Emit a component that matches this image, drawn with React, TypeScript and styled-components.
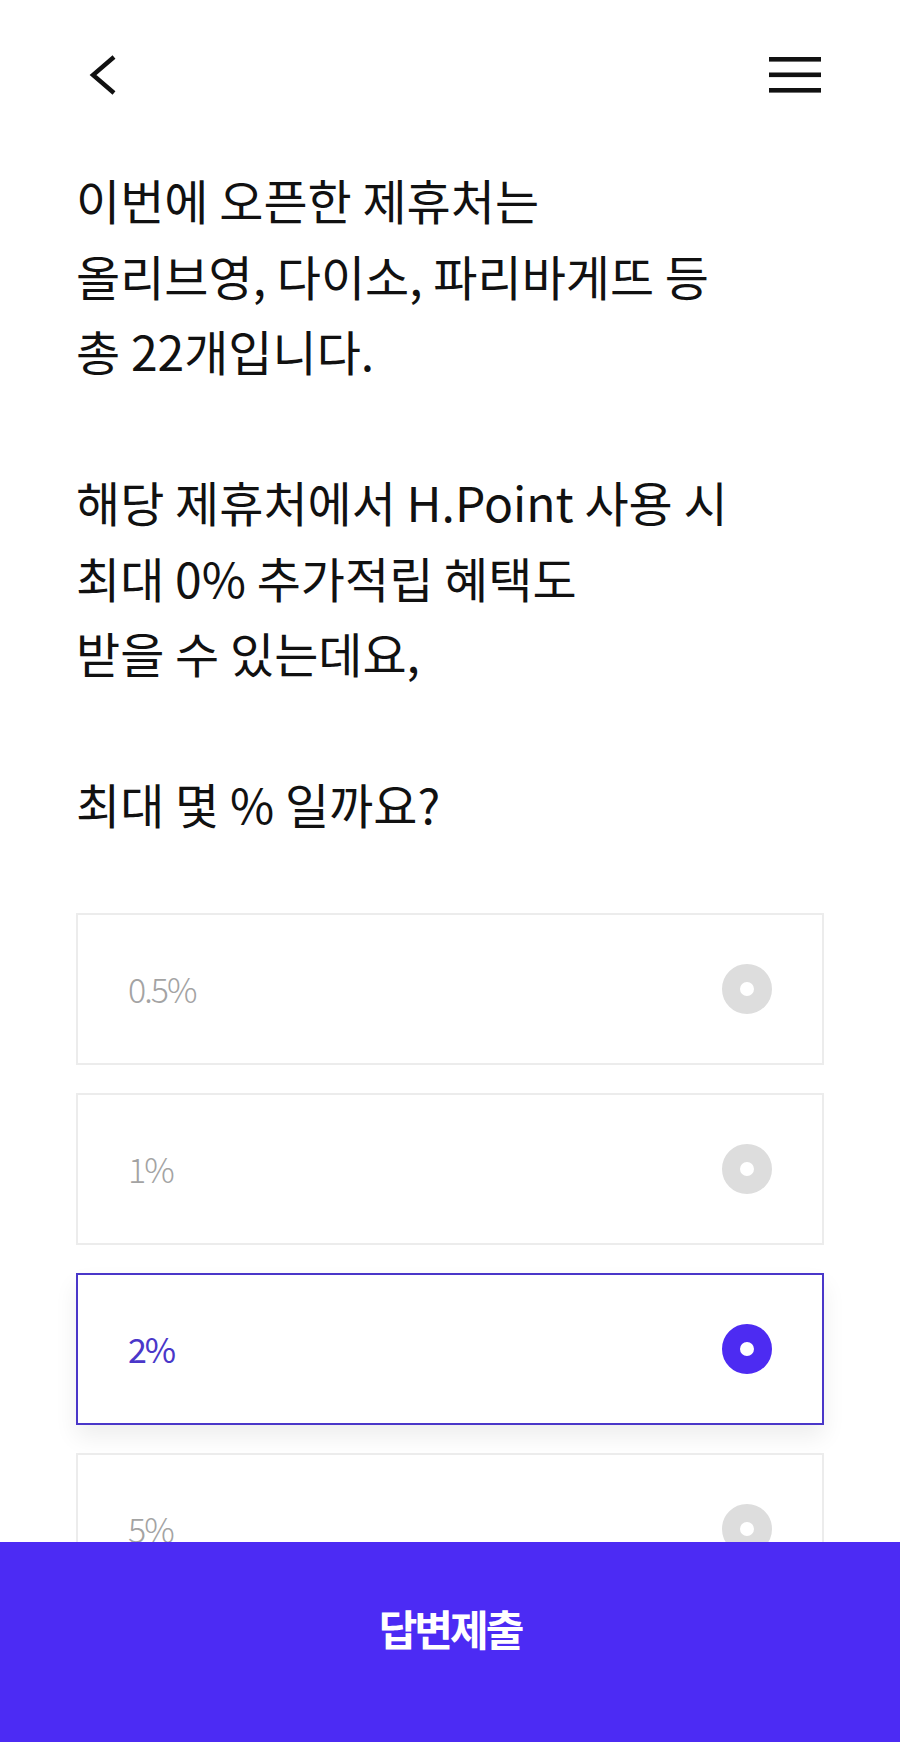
import React, { useState } from "react";
import styled, { createGlobalStyle } from "styled-components";

const GlobalStyle = createGlobalStyle`
  html, body {
    margin: 0;
    padding: 0;
    background: #ffffff;
  }
  body {
    font-family: "Noto Sans CJK KR", "Noto Sans", "Liberation Sans", sans-serif;
    color: #111111;
    -webkit-font-smoothing: antialiased;
  }
  * { box-sizing: border-box; }
`;

const Page = styled.div`
  width: 900px;
  min-height: 1742px;
  background: #ffffff;
  padding-bottom: 220px;
`;

const Header = styled.header`
  height: 150px;
  display: flex;
  align-items: center;
  justify-content: space-between;
  padding: 0 79px 0 89px;
`;

const IconButton = styled.button`
  border: 0;
  background: transparent;
  padding: 0;
  margin: 0;
  display: flex;
  align-items: center;
  justify-content: center;
  cursor: pointer;
`;

const Question = styled.p`
  margin: 12px 0 0;
  padding: 0 76px;
  font-size: 48px;
  line-height: 75.5px;
  font-weight: 400;
  letter-spacing: 0;
  color: #111111;
`;

const Options = styled.ul`
  list-style: none;
  margin: 71px 0 0;
  padding: 0 76px;
  display: flex;
  flex-direction: column;
  gap: 28px;
`;

const OptionRow = styled.li<{ $selected: boolean }>`
  height: 152px;
  display: flex;
  align-items: center;
  justify-content: space-between;
  padding: 0 50px 0 50px;
  background: #ffffff;
  border: 2px solid ${(p) => (p.$selected ? "#4a37c9" : "#ececec")};
  box-shadow: ${(p) =>
    p.$selected ? "0 12px 22px rgba(0, 0, 0, 0.07)" : "none"};
  cursor: pointer;
`;

const OptionLabel = styled.span<{ $selected: boolean }>`
  font-size: 34px;
  letter-spacing: -2px;
  font-weight: ${(p) => (p.$selected ? 400 : 300)};
  color: ${(p) => (p.$selected ? "#4a37c9" : "#a3a3a3")};
`;

const Radio = styled.span<{ $selected: boolean }>`
  width: 50px;
  height: 50px;
  border-radius: 50%;
  border: 18px solid ${(p) => (p.$selected ? "#4d2bf2" : "#dddddd")};
  background: #ffffff;
  flex: none;
`;

const SubmitBar = styled.button`
  position: fixed;
  left: 0;
  right: 0;
  bottom: 0;
  height: 200px;
  border: 0;
  margin: 0;
  padding: 63px 0 0;
  display: flex;
  justify-content: center;
  align-items: flex-start;
  background: #4c2bf4;
  color: #ffffff;
  font-family: "Noto Sans CJK KR", "Noto Sans", sans-serif;
  font-size: 42px;
  line-height: 46px;
  font-weight: 700;
  letter-spacing: -3px;
  cursor: pointer;
`;

const choices = ["0.5%", "1%", "2%", "5%"];

export default function App() {
  const [picked, setPicked] = useState(2);

  return (
    <>
      <GlobalStyle />
      <Page>
        <Header>
          <IconButton aria-label="뒤로">
            <svg width="28" height="40" viewBox="0 0 28 40">
              <polyline
                points="25,2 4,20 25,38"
                fill="none"
                stroke="#111"
                strokeWidth="4.4"
              />
            </svg>
          </IconButton>
          <IconButton aria-label="메뉴">
            <svg width="52" height="36" viewBox="0 0 52 36">
              <rect x="0" y="0" width="52" height="4.6" fill="#111" />
              <rect x="0" y="15.5" width="52" height="4.6" fill="#111" />
              <rect x="0" y="31" width="52" height="4.6" fill="#111" />
            </svg>
          </IconButton>
        </Header>

        <Question>
          이번에 오픈한 제휴처는
          <br />
          올리브영, 다이소, 파리바게뜨 등
          <br />
          총 22개입니다.
          <br />
          <br />
          해당 제휴처에서 H.Point 사용 시
          <br />
          최대 0% 추가적립 혜택도
          <br />
          받을 수 있는데요,
          <br />
          <br />
          최대 몇 % 일까요?
        </Question>

        <Options>
          {choices.map((c, i) => (
            <OptionRow
              key={c}
              $selected={picked === i}
              onClick={() => setPicked(i)}
            >
              <OptionLabel $selected={picked === i}>{c}</OptionLabel>
              <Radio $selected={picked === i} />
            </OptionRow>
          ))}
        </Options>
      </Page>
      <SubmitBar>답변제출</SubmitBar>
    </>
  );
}
